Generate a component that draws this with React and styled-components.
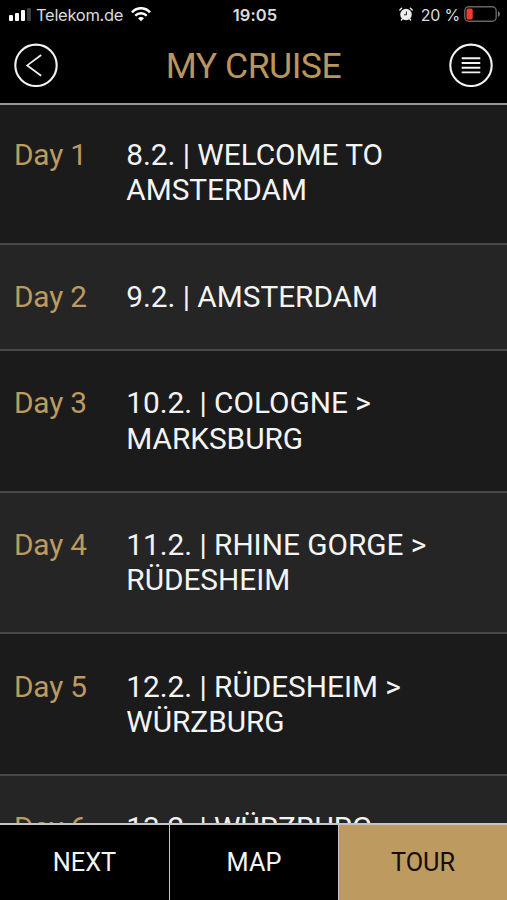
import React from 'react'
import styled, { createGlobalStyle } from 'styled-components'

const GlobalStyle = createGlobalStyle`
  * {
    box-sizing: border-box;
  }

  body {
    margin: 0;
    background: #000;
    font-family: Roboto, 'Liberation Sans', sans-serif;
  }
`

const Screen = styled.div`
  display: flex;
  flex-direction: column;
  height: 100vh;
  overflow: hidden;
  background: #000;
  color: #f4f4f4;
`

const StatusBar = styled.div`
  display: grid;
  grid-template-columns: 1fr auto 1fr;
  align-items: center;
  flex: none;
  height: 30px;
  padding: 0 6px 0 8px;
  font-family: Inter, 'Liberation Sans', sans-serif;
  font-size: 17px;
  line-height: 30px;
  color: #dcdcdc;
`

const StatusGroup = styled.div`
  display: flex;
  align-items: center;
  justify-content: ${({ $end }) => ($end ? 'flex-end' : 'flex-start')};
  white-space: nowrap;

  svg {
    display: block;
    flex: none;
    margin-bottom: 2px;
  }
`

const Carrier = styled.span`
  width: 87px;
  margin: 0 8px 0 5px;
  font-size: 16.5px;
  letter-spacing: -0.3px;
`

const Clock = styled.span`
  padding-left: 1px;
  font-size: 16.5px;
  font-weight: 600;
  letter-spacing: 0.1px;
`

const Charge = styled.span`
  margin: 0 4px 0 8px;
  font-size: 16px;
  letter-spacing: -0.2px;
`

const Header = styled.header`
  display: flex;
  align-items: center;
  justify-content: space-between;
  flex: none;
  height: 75px;
  padding: 0 14px 3px;
  border-bottom: 2px solid #969696;
`

const Title = styled.h1`
  margin: 0;
  padding-top: 2px;
  font-size: 35.6px;
  font-weight: 400;
  letter-spacing: -0.5px;
  line-height: 42px;
  color: #b8965c;
`

const RoundButton = styled.button`
  display: flex;
  width: 44px;
  height: 44px;
  padding: 0;
  border: 0;
  background: none;
`

const Days = styled.main`
  flex: 1;
  min-height: 0;
  overflow: hidden;
`

const DayRow = styled.div`
  display: flex;
  height: ${({ $lines }) => 70.9 + $lines * 35.4}px;
  padding: 34.4px 14px 0;
  border-bottom: 2px solid #484848;
  background: #1b1b1b;
  font-size: 29.8px;
  letter-spacing: -0.03px;
  line-height: 35.4px;

  &:nth-child(even) {
    background: #252525;
  }

  &:first-child {
    height: 139.6px;
    padding-top: 32px;
  }
`

const DayLabel = styled.div`
  flex: none;
  width: 112.3px;
  letter-spacing: -0.2px;
  color: #bd9a5f;
`

const Route = styled.div`
  white-space: pre-line;
`

const Tabs = styled.nav`
  display: grid;
  grid-template-columns: 169px 169px 1fr;
  flex: none;
  height: 77px;
  border-top: 2px solid #c4c4c4;
`

const Tab = styled.button`
  padding: 0;
  border: 0;
  border-left: ${({ $first }) => ($first ? '0' : '1.5px solid #c4c4c4')};
  background: ${({ $active }) => ($active ? '#bd9a60' : '#000')};
  color: ${({ $active }) => ($active ? '#170b02' : '#f4f4f4')};
  font: 400 25.3px Roboto, sans-serif;
`

const Signal = () => (
  <svg width="23" height="14" viewBox="0 0 23 14" fill="#fff">
    <rect x="1" y="8" width="4" height="6" rx="1" />
    <rect x="7" y="6" width="4" height="8" rx="1" />
    <rect x="13" y="3" width="4" height="11" rx="1" />
    <rect x="19" y="1" width="4" height="13" rx="1" fill="#3c3c3c" />
  </svg>
)

const Wifi = () => (
  <svg width="20" height="15" viewBox="0 0 20 15" fill="none" stroke="#fff">
    <path d="M1 5.3C6-.1 14-.1 19 5.3" strokeWidth="2.6" />
    <path d="M4.3 8.8c3.1-3.4 8.3-3.4 11.4 0" strokeWidth="2.4" />
    <path d="M7 11.2c1.7-1.6 4.3-1.6 6 0L10 14.3z" fill="#fff" stroke="none" />
  </svg>
)

const Alarm = () => (
  <svg width="14" height="14" viewBox="0 0 14 14">
    <circle cx="7" cy="7.5" r="5.8" fill="#eee" />
    <path
      d="M.8 3 2.6 1.2M13.2 3 11.4 1.2M3.2 12l-.8 1M10.8 12l.8 1"
      stroke="#eee"
      strokeWidth="1.4"
      strokeLinecap="round"
    />
    <path d="M7.4 4.4v3.4H5" fill="none" stroke="#222" strokeWidth="1" />
  </svg>
)

const Battery = () => (
  <svg width="37" height="16" viewBox="0 0 37 16">
    <rect x=".8" y=".8" width="31.4" height="14.4" rx="4" fill="none" stroke="#666" strokeWidth="1.4" />
    <rect x="2.5" y="2.5" width="6.2" height="11" rx="1.5" fill="#f13a31" />
    <path d="M34 5.2c2.6.8 2.6 4.8 0 5.6z" fill="#777" />
  </svg>
)

const BackIcon = () => (
  <svg width="44" height="44" viewBox="0 0 44 44" fill="none" stroke="#f2f2f2">
    <circle cx="22" cy="22.3" r="20.7" strokeWidth="2.1" />
    <path d="M27.2 12 13.2 22.4l14 10.4" strokeWidth="1.7" />
  </svg>
)

const MenuIcon = () => (
  <svg width="44" height="44" viewBox="0 0 44 44" fill="none" stroke="#f2f2f2">
    <circle cx="22" cy="22.3" r="20.7" strokeWidth="2.1" />
    <path d="M12.7 15.3h18.6M12.7 20h18.6M12.7 24.7h18.6M12.7 29.4h18.6" strokeWidth="1.9" />
  </svg>
)

const days = [
  ['8.2. | WELCOME TO', 'AMSTERDAM'],
  ['9.2. | AMSTERDAM'],
  ['10.2. | COLOGNE >', 'MARKSBURG'],
  ['11.2. | RHINE GORGE >', 'RÜDESHEIM'],
  ['12.2. | RÜDESHEIM >', 'WÜRZBURG'],
  ['13.2. | WÜRZBURG'],
]

const App = () => (
  <Screen>
    <GlobalStyle />
    <StatusBar>
      <StatusGroup>
        <Signal />
        <Carrier>Telekom.de</Carrier>
        <Wifi />
      </StatusGroup>
      <Clock>19:05</Clock>
      <StatusGroup $end>
        <Alarm />
        <Charge>20 %</Charge>
        <Battery />
      </StatusGroup>
    </StatusBar>

    <Header>
      <RoundButton aria-label="Back">
        <BackIcon />
      </RoundButton>
      <Title>MY CRUISE</Title>
      <RoundButton aria-label="Menu">
        <MenuIcon />
      </RoundButton>
    </Header>

    <Days>
      {days.map((lines, key) => (
        <DayRow key={key} $lines={lines.length}>
          <DayLabel>Day {key + 1}</DayLabel>
          <Route>{lines.join('\n')}</Route>
        </DayRow>
      ))}
    </Days>

    <Tabs>
      <Tab $first>NEXT</Tab>
      <Tab>MAP</Tab>
      <Tab $active>TOUR</Tab>
    </Tabs>
  </Screen>
)

export default App
